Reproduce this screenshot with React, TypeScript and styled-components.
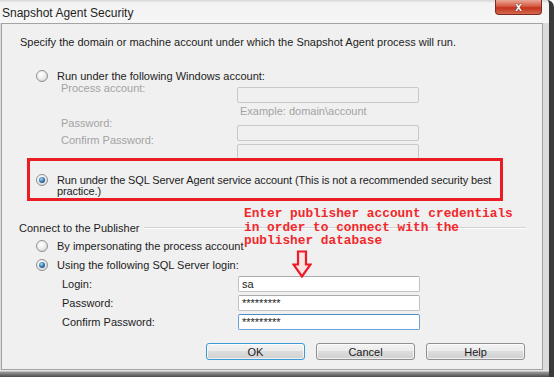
import React from 'react';
import styled, { createGlobalStyle, css } from 'styled-components';

const GlobalStyle = createGlobalStyle`
  * { box-sizing: border-box; }
  html, body { margin: 0; padding: 0; background: #ffffff; }
  body {
    font-family: "Liberation Sans", Arial, sans-serif;
    font-size: 11px;
    color: #1c1c1c;
  }
`;

const Window = styled.div`
  width: 554px;
  height: 377px;
  display: flex;
  flex-direction: column;
  background: #dcdcdc;
  border-right: 5px solid #3a3a3a;
  border-top-right-radius: 7px;
  overflow: hidden;
`;

const TitleBar = styled.div`
  height: 23px;
  flex: none;
  display: flex;
  justify-content: space-between;
  align-items: flex-start;
  background: linear-gradient(to bottom, #d6d6d6 0, #f3f3f3 3px, #f6f6f6 100%);
`;

const Title = styled.div`
  padding: 6px 0 0 2px;
  font-size: 12px;
  line-height: 14px;
  color: #1e1e1e;
`;

const CloseButton = styled.div`
  width: 47px;
  height: 15px;
  margin-right: 7px;
  display: flex;
  align-items: center;
  justify-content: center;
  border: 1px solid #7a2b20;
  border-top: none;
  border-radius: 0 0 4px 4px;
  background: linear-gradient(to bottom, #e9a797 0%, #d65a43 45%, #c3321c 55%, #d4684c 100%);
  color: #ffffff;
  font-size: 12px;
  font-weight: bold;
  line-height: 12px;
  text-shadow: 0 0 1px #4a140c, 0 0 1px #4a140c;
`;

const Body = styled.div`
  flex: 1;
  display: flex;
  padding-left: 1px;
`;

const Panel = styled.div`
  position: relative;
  width: 542px;
  flex: none;
  border: 1px solid #a3a3a3;
  background: #f0f0f0;
  padding-top: 11px;
`;

const BottomEdge = styled.div`
  height: 7px;
  flex: none;
  background: linear-gradient(to bottom, #e4e4e4 0, #e4e4e4 1px, #9a9a9a 2px, #4a4a4a 100%);
`;

const Intro = styled.div`
  padding-left: 18px;
  line-height: 14px;
`;

const Option = styled.div<{ $top: number }>`
  display: flex;
  align-items: center;
  margin-top: ${p => p.$top}px;
  padding-left: 34px;
  line-height: 14px;
`;

const Radio = styled.span<{ $checked?: boolean }>`
  flex: none;
  width: 12px;
  height: 12px;
  margin-right: 9px;
  border-radius: 50%;
  border: 1px solid #8e8f8f;
  background: radial-gradient(circle at 40% 35%, #ffffff 0%, #efefef 45%, #c6c6c6 100%);
  display: flex;
  align-items: center;
  justify-content: center;
  ${p => p.$checked && css`
    &::after {
      content: '';
      width: 6px;
      height: 6px;
      border-radius: 50%;
      background: radial-gradient(circle at 40% 35%, #a5dbf8 0%, #2c6ca6 55%, #103c66 100%);
    }
  `}
`;

const AccountGroup = styled.div`
  display: grid;
  grid-template-columns: 176px 182px;
  padding-left: 59px;
  color: #a3a3a3;
`;

const Stack = styled.div`
  display: flex;
  flex-direction: column;
`;

const DimLabel = styled.div<{ $top: number }>`
  margin-top: ${p => p.$top}px;
  line-height: 12px;
`;

const Hint = styled.div`
  margin-top: 2px;
  padding-left: 3px;
  line-height: 12px;
`;

const TextBox = styled.div<{ $state?: 'disabled' | 'normal' | 'focus'; $top?: number }>`
  width: 182px;
  height: 16px;
  margin-top: ${p => p.$top ?? 0}px;
  padding: 0 3px;
  border: 1px solid #c2c2c2;
  border-top-color: #ababab;
  border-radius: 2px;
  background: #ffffff;
  color: #1c1c1c;
  font-size: 11px;
  line-height: 14px;
  overflow: hidden;
  ${p => p.$state === 'disabled' && css`
    background: #f0f0f0;
    border-color: #c8c8c8;
  `}
  ${p => p.$state === 'focus' && css`
    border-color: #6aa3d6;
    border-top-color: #4f8cc6;
  `}
`;

const Highlight = styled.div`
  position: relative;
  z-index: 1;
  width: 476px;
  margin: -2px 0 0 25px;
  padding: 14px 0 1px 6px;
  border: 3px solid #ec1c24;
  background: #f0f0f0;
  display: flex;
  align-items: flex-start;
  line-height: 11px;
  letter-spacing: -0.12px;
  white-space: nowrap;

  ${Radio} {
    margin-top: -1px;
  }
`;

const GroupHeader = styled.div`
  display: flex;
  align-items: center;
  margin-top: 20px;
  padding: 0 16px 0 17px;
  line-height: 14px;
`;

const Separator = styled.div`
  flex: 1;
  margin-left: 5px;
  border-top: 1px solid #d2d2d2;
  border-bottom: 1px solid #ffffff;
`;

const LoginGrid = styled.div`
  display: grid;
  grid-template-columns: 176px 182px;
  grid-auto-rows: 16px;
  row-gap: 3px;
  align-items: center;
  margin-top: 4px;
  padding-left: 60px;
`;

const ButtonRow = styled.div`
  display: flex;
  justify-content: flex-end;
  gap: 11px;
  margin-top: 13px;
  padding-right: 17px;
`;

const DialogButton = styled.button<{ $default?: boolean }>`
  width: 99px;
  height: 17px;
  padding: 0;
  font-family: "Liberation Sans", Arial, sans-serif;
  font-size: 11px;
  line-height: 14px;
  color: #1a1a1a;
  border: 1px solid ${p => (p.$default ? '#3c99d4' : '#8f8f8f')};
  border-radius: 3px;
  background: linear-gradient(to bottom, #f3f3f3 0%, #ececec 45%, #dddddd 50%, #d0d0d0 100%);
  box-shadow: inset 0 0 0 1px rgba(255, 255, 255, 0.7);
`;

const Note = styled.div`
  position: absolute;
  z-index: 2;
  left: 242px;
  top: 183px;
  font-family: "Liberation Mono", "Courier New", monospace;
  font-size: 12.8px;
  font-weight: bold;
  line-height: 13.5px;
  color: #f0282c;
  white-space: pre;
`;

const NoteArrow = styled.svg`
  position: absolute;
  z-index: 2;
  left: 290px;
  top: 226px;
`;

const App: React.FC = () => {
  return (
    <>
      <GlobalStyle />
      <Window>
        <TitleBar>
          <Title>Snapshot Agent Security</Title>
          <CloseButton>x</CloseButton>
        </TitleBar>
        <Body>
          <Panel>
            <Intro>Specify the domain or machine account under which the Snapshot Agent process will run.</Intro>

            <Option $top={20}>
              <Radio />
              Run under the following Windows account:
            </Option>

            <AccountGroup>
              <Stack>
                <DimLabel $top={-1}>Process account:</DimLabel>
                <DimLabel $top={23}>Password:</DimLabel>
                <DimLabel $top={5}>Confirm Password:</DimLabel>
              </Stack>
              <Stack>
                <TextBox $state="disabled" $top={4} />
                <Hint>Example: domain\account</Hint>
                <TextBox $state="disabled" $top={8} />
                <TextBox $state="disabled" $top={3} />
              </Stack>
            </AccountGroup>

            <Highlight>
              <Radio $checked />
              <div>
                Run under the SQL Server Agent service account (This is not a recommended security best
                <br />
                practice.)
              </div>
            </Highlight>

            <GroupHeader>
              Connect to the Publisher
              <Separator />
            </GroupHeader>

            <Option $top={4}>
              <Radio />
              By impersonating the process account
            </Option>
            <Option $top={5}>
              <Radio $checked />
              Using the following SQL Server login:
            </Option>

            <LoginGrid>
              <span>Login:</span>
              <TextBox>sa</TextBox>
              <span>Password:</span>
              <TextBox>*********</TextBox>
              <span>Confirm Password:</span>
              <TextBox $state="focus">*********</TextBox>
            </LoginGrid>

            <ButtonRow>
              <DialogButton $default>OK</DialogButton>
              <DialogButton>Cancel</DialogButton>
              <DialogButton>Help</DialogButton>
            </ButtonRow>

            <Note>{'Enter publisher account credentials\nin order to connect with the\npublisher database'}</Note>
            <NoteArrow width="20" height="28" viewBox="0 0 20 28">
              <path
                d="M6 1.5 H14 V14.5 H18.5 L10 26.5 L1.5 14.5 H6 Z"
                fill="#fbe4e4"
                stroke="#ec1c24"
                strokeWidth="2.2"
                strokeLinejoin="miter"
              />
            </NoteArrow>
          </Panel>
          <div style={{ flex: 1 }} />
        </Body>
        <BottomEdge />
      </Window>
    </>
  );
};

export default App;
